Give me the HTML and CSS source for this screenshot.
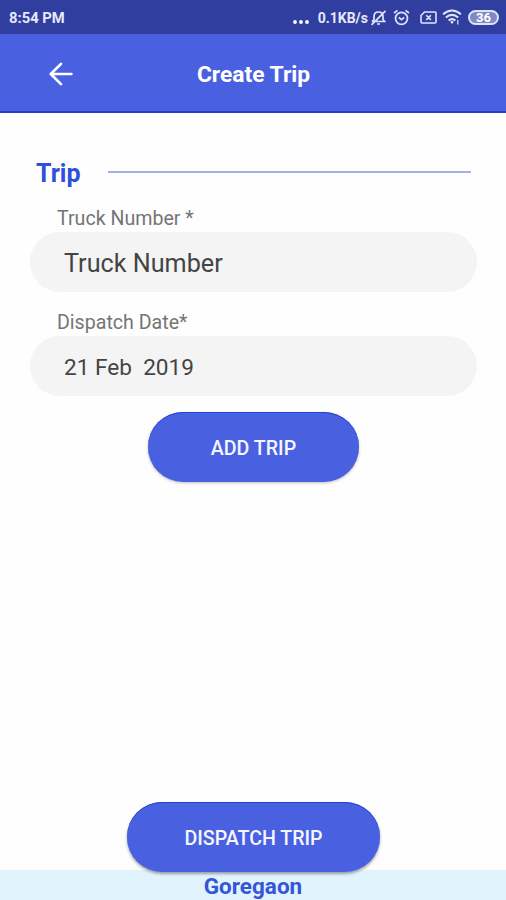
FILE: index.html
```html
<!DOCTYPE html>
<html lang="en">
<head>
    <meta charset="UTF-8">
    <title>Create Trip</title>
    <link rel="stylesheet" href="styles.css">
</head>
<body>
<div class="statusBar">
    <span class="clock">8:54 PM</span>
    <div class="statusIcons">
        <svg class="dots" width="16" height="4" viewBox="0 0 16 4" fill="#fff">
            <circle cx="2" cy="2" r="1.9"/>
            <circle cx="8" cy="2" r="1.9"/>
            <circle cx="14" cy="2" r="1.9"/>
        </svg>
        <span class="speed">0.1KB/s</span>
        <svg class="mute" width="17" height="17" viewBox="0 0 17 17" fill="none" stroke="#dfe3fa" stroke-width="1.7">
            <path d="M2 12.5 H14.5 L13 10.5 V7.5 C13 4.5 11.3 3 8.5 3 C5.7 3 4 4.5 4 7.5 V10.5 L2 12.5 M7 15 H10 M1.5 15.8 L15.5 1.8"/>
        </svg>
        <svg class="alarm" width="17" height="17" viewBox="0 0 17 17" fill="none" stroke="#dfe3fa" stroke-width="1.7">
            <circle cx="8.5" cy="9.3" r="6"/>
            <path d="M1 4 L4.5 1.3 M16 4 L12.5 1.3 M5.8 8.3 L8.5 10.6 L11.3 8.3"/>
        </svg>
        <svg class="sim" width="17" height="13" viewBox="0 0 17 13" fill="none" stroke="#dfe3fa" stroke-width="1.6">
            <path d="M4.5 1 H15 Q16 1 16 2 V11 Q16 12 15 12 H2 Q1 12 1 11 V4.5 Z M6.3 4.3 L10.9 8.9 M10.9 4.3 L6.3 8.9"/>
        </svg>
        <svg class="wifi" width="20" height="16" viewBox="0 0 20 16" fill="none" stroke="#dfe3fa" stroke-width="2">
            <path d="M1 5.3 Q10 -2.3 19 5.3 M3.8 8.6 Q10 3.2 16.2 8.6 M6.6 11.6 Q10 8.6 13.4 11.6"/>
            <path d="M8.2 12.7 Q10 11.5 11.8 12.7 L10 15 Z" fill="#dfe3fa" stroke="none"/>
            <path d="M15.8 11 V15.5" stroke-width="1.2"/>
        </svg>
        <span class="battery">36</span>
    </div>
</div>

<div class="header">
    <svg class="back" width="24" height="24" viewBox="0 0 24 24" fill="none" stroke="#fff" stroke-width="2.6" stroke-linecap="round" stroke-linejoin="round">
        <path d="M12 1.8 L1.8 12 L12 22.2 M2.4 12 H22.4"/>
    </svg>
    <span class="title">Create Trip</span>
</div>

<div class="content">
    <div class="section">
        <span class="sectionName">Trip</span>
        <div class="line"></div>
    </div>
    <div class="label">Truck Number *</div>
    <div class="field truck">Truck Number</div>
    <div class="label">Dispatch Date*</div>
    <div class="field date">21 Feb&nbsp; 2019</div>
    <button class="btn addTrip">ADD TRIP</button>
    <button class="btn dispatchTrip">DISPATCH TRIP</button>
</div>

<div class="place">Goregaon</div>
</body>
</html>
```

FILE: styles.css
```css
body {
    margin: 0;
    height: 900px;
    display: flex;
    flex-direction: column;
    overflow: hidden;
    background: #fefefe;
    font-family: Roboto, "Liberation Sans", sans-serif;
}

.statusBar {
    height: 34px;
    flex: none;
    display: flex;
    align-items: center;
    justify-content: space-between;
    padding: 0 7px 0 9px;
    background: #303f9f;
    color: #e6e9fb;
}

.clock {
    padding-top: 2px;
    font-size: 14.8px;
    font-weight: 700;
}

.statusIcons {
    display: flex;
    align-items: center;
}

.dots {
    margin: 9px 9px 0 0;
}

.speed {
    padding-top: 1px;
    font-size: 14px;
    font-weight: 700;
    margin-right: 2px;
}

.alarm {
    margin-left: 6px;
}

.sim {
    margin-left: 10px;
}

.wifi {
    margin: 0 6px 0 5px;
}

.battery {
    box-sizing: border-box;
    width: 31px;
    height: 15px;
    border: 2px solid #dfe3fa;
    border-radius: 8px;
    background: #8089c6;
    font-size: 13px;
    font-weight: 700;
    line-height: 12px;
    text-align: center;
    color: #fff;
}

.header {
    box-sizing: border-box;
    height: 79px;
    flex: none;
    display: grid;
    grid-template-columns: 1fr auto 1fr;
    align-items: center;
    padding: 3px 48px 0 49px;
    border-bottom: 2px solid #2040cf;
    background: #4961e1;
}

.back {
    margin-bottom: 1px;
}

.title {
    padding-top: 1px;
    font-size: 22.8px;
    font-weight: 700;
    color: #fff;
}

.content {
    flex: 1;
    display: flex;
    flex-direction: column;
    padding: 45px 29px 0 30px;
}

.section {
    height: 31px;
    display: flex;
    align-items: center;
    padding: 0 6px;
    margin-bottom: 16px;
}

.sectionName {
    width: 72px;
    font-size: 25px;
    font-weight: 700;
    color: #2f50dc;
}

.line {
    flex: 1;
    height: 2px;
    margin-top: -3px;
    background: #a5b1e6;
}

.label {
    height: 27px;
    line-height: 27px;
    padding-left: 27px;
    font-size: 19.6px;
    color: #757575;
}

.field {
    height: 60px;
    line-height: 63px;
    border-radius: 30px;
    padding-left: 34px;
    background: #f4f4f4;
    color: #444;
}

.truck {
    font-size: 25.2px;
    line-height: 64px;
    margin-bottom: 17px;
}

.date {
    font-size: 22.6px;
    margin-bottom: 16px;
}

.btn {
    flex: none;
    align-self: center;
    height: 70px;
    padding: 2px 0 0;
    border: 0;
    border-radius: 35px;
    background: #4961e1;
    box-shadow: inset 0 1px 0 #1f45d2, 0 1px 3px rgba(0, 0, 0, 0.25);
    font-family: inherit;
    font-size: 19.6px;
    font-weight: 500;
    color: #f5f6ff;
}

.addTrip {
    width: 211px;
}

.dispatchTrip {
    width: 253px;
    margin-top: auto;
    margin-bottom: -2px;
    box-shadow: inset 0 1px 0 #1f45d2, 0 2px 3px rgba(0, 0, 0, 0.35);
    z-index: 1;
}

.place {
    height: 30px;
    flex: none;
    line-height: 33px;
    background: #e1f4fe;
    font-size: 22.5px;
    font-weight: 700;
    text-align: center;
    color: #3554d6;
}
```
